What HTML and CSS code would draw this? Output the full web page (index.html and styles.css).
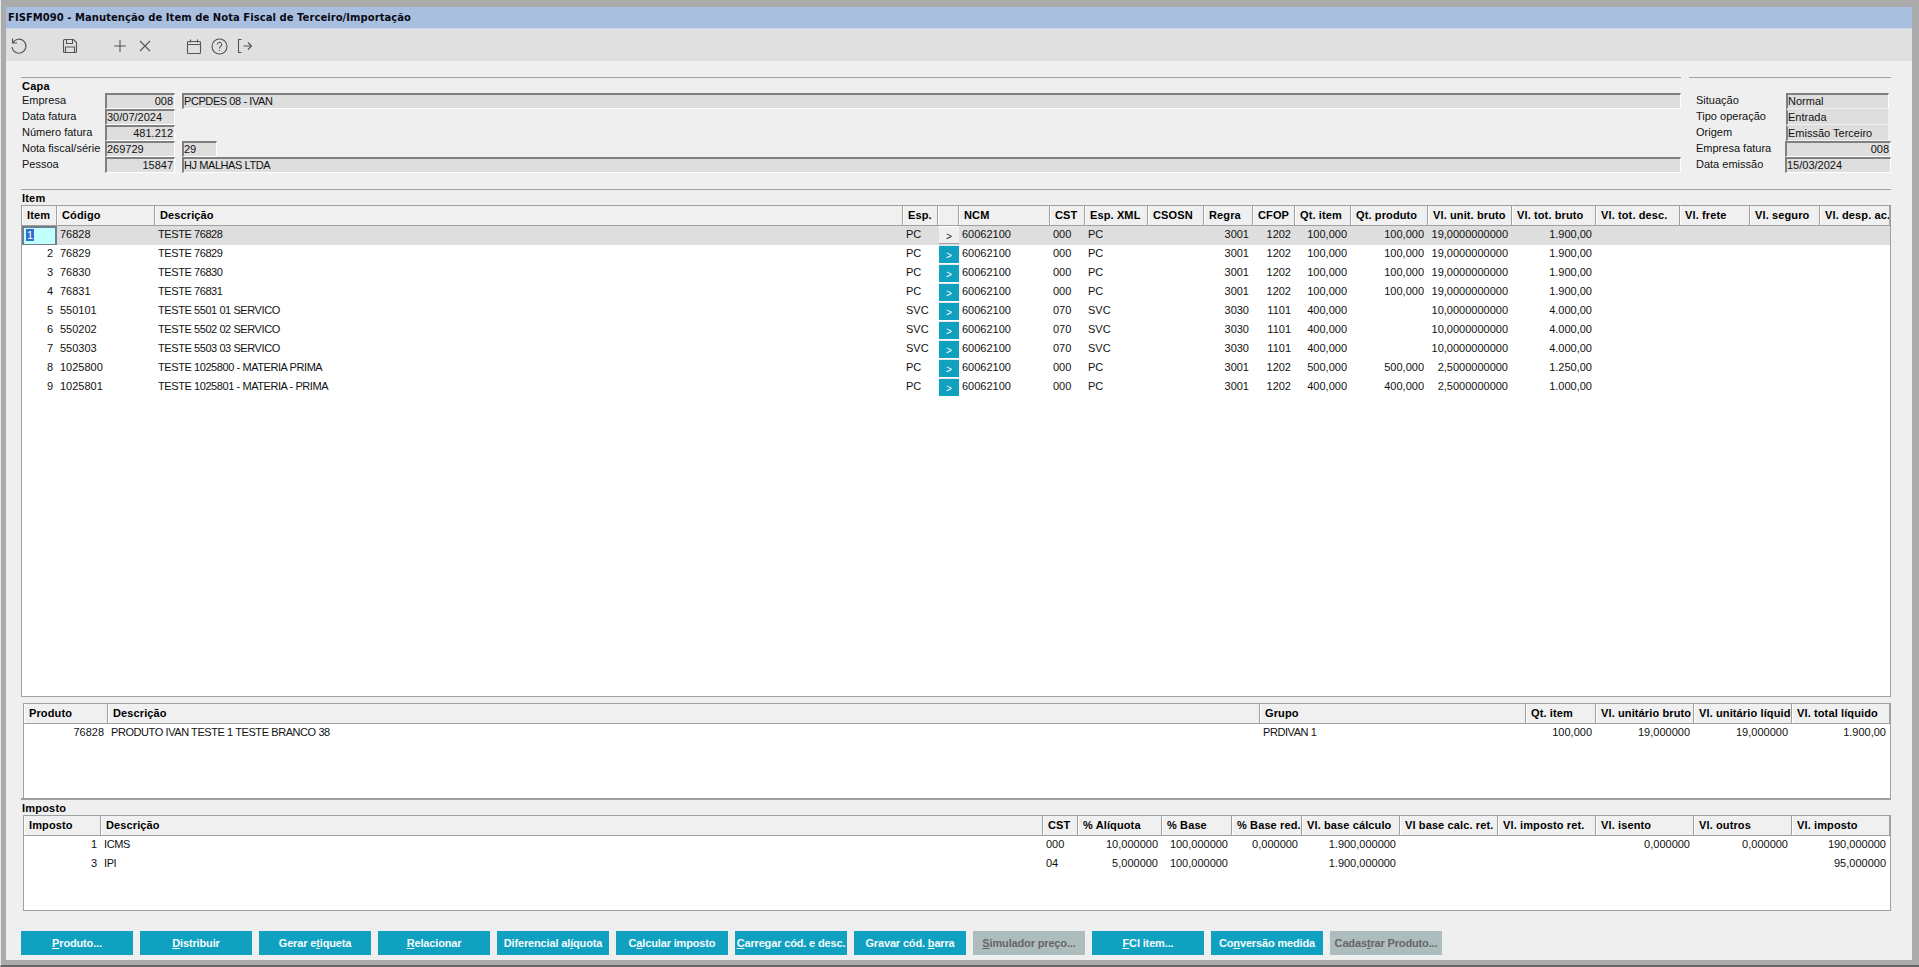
FILE: index.html
```html
<!DOCTYPE html>
<html lang="pt">
<head>
<meta charset="utf-8">
<title>FISFM090</title>
<link rel="stylesheet" href="styles.css">
</head>
<body>
<div class="window">
  <div class="title">FISFM090 - Manutenção de Item de Nota Fiscal de Terceiro/Importação</div>
  <div class="toolbar">
    <svg class="ic i-undo" width="18" height="18" viewBox="0 0 18 18"><path d="M2.5 1.5v4.5h4.5M2.8 5.8A7 7 0 1 1 2 10"/></svg>
    <svg class="ic i-save" width="16" height="16" viewBox="0 0 16 16"><path d="M1.5 2.5a1 1 0 0 1 1-1h9l3 3v9a1 1 0 0 1-1 1h-11a1 1 0 0 1-1-1zM4.5 1.5v4h6v-4M3.5 14.500v-5.500h9v5.500"/></svg>
    <svg class="ic i-plus" width="14" height="14" viewBox="0 0 14 14"><path d="M7 1v12M1 7h12"/></svg>
    <svg class="ic i-x" width="14" height="14" viewBox="0 0 14 14"><path d="M2 2l10 10M12 2L2 12"/></svg>
    <svg class="ic i-cal" width="16" height="17" viewBox="0 0 16 17"><path d="M1.500 4.500a1 1 0 0 1 1-1h11a1 1 0 0 1 1 1v10a1 1 0 0 1-1 1h-11a1 1 0 0 1-1-1zM1.500 6.500h13M4.500 1.500v3M11.500 1.500v3"/></svg>
    <svg class="ic i-help" width="17" height="17" viewBox="0 0 17 17"><circle cx="8.500" cy="8.500" r="7.500"/><path d="M6.300 6.500a2.200 2.200 0 1 1 3.400 1.900c-.8.500-1.200 1-1.200 2M8.500 12v1"/></svg>
    <svg class="ic i-exit" width="16" height="16" viewBox="0 0 16 16"><path d="M4.500 1.500h-3v13h3M6.500 8h8M11 4.500l3.500 3.500-3.500 3.500"/></svg>
  </div>
  <div class="content">
    <div class="capa">
      <section class="capa-main">
        <div class="legend">Capa</div>
        <div class="frow"><span class="lbl">Empresa</span><span class="fld w70 num">008</span><span class="fld grow cap">PCPDES 08 - IVAN</span></div>
        <div class="frow"><span class="lbl">Data fatura</span><span class="fld w70">30/07/2024</span></div>
        <div class="frow"><span class="lbl">Número fatura</span><span class="fld w70 num">481.212</span></div>
        <div class="frow"><span class="lbl">Nota fiscal/série</span><span class="fld w70">269729</span><span class="fld w35">29</span></div>
        <div class="frow"><span class="lbl">Pessoa</span><span class="fld w70 num">15847</span><span class="fld grow cap">HJ MALHAS LTDA</span></div>
      </section>
      <section class="capa-side">
        <div class="legend"></div>
        <div class="srow"><span class="lbl">Situação</span><span class="fld inner flat-top">Normal</span></div>
        <div class="srow"><span class="lbl">Tipo operação</span><span class="fld inner plain">Entrada</span></div>
        <div class="srow"><span class="lbl">Origem</span><span class="fld inner plain">Emissão Terceiro</span></div>
        <div class="srow"><span class="lbl">Empresa fatura</span><span class="fld outer num">008</span></div>
        <div class="srow"><span class="lbl">Data emissão</span><span class="fld outer">15/03/2024</span></div>
      </section>
    </div>

    <section class="sect-item">
      <div class="legend">Item</div>
      <div class="grid g-item">
        <div class="row head"><span>Item</span><span>Código</span><span>Descrição</span><span>Esp.</span><span></span><span>NCM</span><span>CST</span><span>Esp. XML</span><span>CSOSN</span><span>Regra</span><span>CFOP</span><span>Qt. item</span><span>Qt. produto</span><span>Vl. unit. bruto</span><span>Vl. tot. bruto</span><span>Vl. tot. desc.</span><span>Vl. frete</span><span>Vl. seguro</span><span>Vl. desp. ac.</span></div>
        <div class="row sel"><span class="num focus"><b class="caret">1</b></span><span>76828</span><span class="cap">TESTE 76828</span><span>PC</span><span class="btn off">&gt;</span><span>60062100</span><span>000</span><span>PC</span><span></span><span class="num">3001</span><span class="num">1202</span><span class="num">100,000</span><span class="num">100,000</span><span class="num">19,0000000000</span><span class="num">1.900,00</span><span></span><span></span><span></span><span></span></div>
        <div class="row"><span class="num">2</span><span>76829</span><span class="cap">TESTE 76829</span><span>PC</span><span class="btn">&gt;</span><span>60062100</span><span>000</span><span>PC</span><span></span><span class="num">3001</span><span class="num">1202</span><span class="num">100,000</span><span class="num">100,000</span><span class="num">19,0000000000</span><span class="num">1.900,00</span><span></span><span></span><span></span><span></span></div>
        <div class="row"><span class="num">3</span><span>76830</span><span class="cap">TESTE 76830</span><span>PC</span><span class="btn">&gt;</span><span>60062100</span><span>000</span><span>PC</span><span></span><span class="num">3001</span><span class="num">1202</span><span class="num">100,000</span><span class="num">100,000</span><span class="num">19,0000000000</span><span class="num">1.900,00</span><span></span><span></span><span></span><span></span></div>
        <div class="row"><span class="num">4</span><span>76831</span><span class="cap">TESTE 76831</span><span>PC</span><span class="btn">&gt;</span><span>60062100</span><span>000</span><span>PC</span><span></span><span class="num">3001</span><span class="num">1202</span><span class="num">100,000</span><span class="num">100,000</span><span class="num">19,0000000000</span><span class="num">1.900,00</span><span></span><span></span><span></span><span></span></div>
        <div class="row"><span class="num">5</span><span>550101</span><span class="cap">TESTE 5501 01 SERVICO</span><span>SVC</span><span class="btn">&gt;</span><span>60062100</span><span>070</span><span>SVC</span><span></span><span class="num">3030</span><span class="num">1101</span><span class="num">400,000</span><span class="num"></span><span class="num">10,0000000000</span><span class="num">4.000,00</span><span></span><span></span><span></span><span></span></div>
        <div class="row"><span class="num">6</span><span>550202</span><span class="cap">TESTE 5502 02 SERVICO</span><span>SVC</span><span class="btn">&gt;</span><span>60062100</span><span>070</span><span>SVC</span><span></span><span class="num">3030</span><span class="num">1101</span><span class="num">400,000</span><span class="num"></span><span class="num">10,0000000000</span><span class="num">4.000,00</span><span></span><span></span><span></span><span></span></div>
        <div class="row"><span class="num">7</span><span>550303</span><span class="cap">TESTE 5503 03 SERVICO</span><span>SVC</span><span class="btn">&gt;</span><span>60062100</span><span>070</span><span>SVC</span><span></span><span class="num">3030</span><span class="num">1101</span><span class="num">400,000</span><span class="num"></span><span class="num">10,0000000000</span><span class="num">4.000,00</span><span></span><span></span><span></span><span></span></div>
        <div class="row"><span class="num">8</span><span>1025800</span><span class="cap">TESTE 1025800 - MATERIA PRIMA</span><span>PC</span><span class="btn">&gt;</span><span>60062100</span><span>000</span><span>PC</span><span></span><span class="num">3001</span><span class="num">1202</span><span class="num">500,000</span><span class="num">500,000</span><span class="num">2,5000000000</span><span class="num">1.250,00</span><span></span><span></span><span></span><span></span></div>
        <div class="row"><span class="num">9</span><span>1025801</span><span class="cap">TESTE 1025801 - MATERIA - PRIMA</span><span>PC</span><span class="btn">&gt;</span><span>60062100</span><span>000</span><span>PC</span><span></span><span class="num">3001</span><span class="num">1202</span><span class="num">400,000</span><span class="num">400,000</span><span class="num">2,5000000000</span><span class="num">1.000,00</span><span></span><span></span><span></span><span></span></div>
      </div>
    </section>

    <div class="grid g-prod">
      <div class="row head"><span>Produto</span><span>Descrição</span><span>Grupo</span><span>Qt. item</span><span>Vl. unitário bruto</span><span>Vl. unitário líquido</span><span>Vl. total líquido</span></div>
      <div class="row"><span class="num">76828</span><span class="cap">PRODUTO IVAN TESTE 1 TESTE BRANCO 38</span><span class="cap">PRDIVAN 1</span><span class="num">100,000</span><span class="num">19,000000</span><span class="num">19,000000</span><span class="num">1.900,00</span></div>
    </div>

    <section class="sect-imposto">
      <div class="legend">Imposto</div>
      <div class="grid g-imp">
        <div class="row head"><span>Imposto</span><span>Descrição</span><span>CST</span><span>% Alíquota</span><span>% Base</span><span>% Base red.</span><span>Vl. base cálculo</span><span>Vl base calc. ret.</span><span>Vl. imposto ret.</span><span>Vl. isento</span><span>Vl. outros</span><span>Vl. imposto</span></div>
        <div class="row"><span class="num">1</span><span class="cap">ICMS</span><span>000</span><span class="num">10,000000</span><span class="num">100,000000</span><span class="num">0,000000</span><span class="num">1.900,000000</span><span></span><span></span><span class="num">0,000000</span><span class="num">0,000000</span><span class="num">190,000000</span></div>
        <div class="row"><span class="num">3</span><span class="cap">IPI</span><span>04</span><span class="num">5,000000</span><span class="num">100,000000</span><span></span><span class="num">1.900,000000</span><span></span><span></span><span></span><span></span><span class="num">95,000000</span></div>
      </div>
    </section>

    <div class="actions">
      <button class="act"><u>P</u>roduto...</button>
      <button class="act"><u>D</u>istribuir</button>
      <button class="act">Gerar e<u>t</u>iqueta</button>
      <button class="act"><u>R</u>elacionar</button>
      <button class="act">Diferencial al<u>í</u>quota</button>
      <button class="act">C<u>a</u>lcular imposto</button>
      <button class="act"><u>C</u>arregar cód. e desc.</button>
      <button class="act">Gravar cód. <u>b</u>arra</button>
      <button class="act dis"><u>S</u>imulador preço...</button>
      <button class="act"><u>F</u>CI item...</button>
      <button class="act">Co<u>n</u>versão medida</button>
      <button class="act dis">Cadas<u>t</u>rar Produto...</button>
    </div>
  </div>
</div>
</body>
</html>
```

FILE: styles.css
```css
* { box-sizing: border-box; }
html, body { margin: 0; height: 967px; overflow: hidden; }
body { font-family: "Liberation Sans", Arial, sans-serif; font-size: 11px; color: #111; background: #ababab; }

.window {
  height: 967px;
  display: flex;
  flex-direction: column;
  padding: 7px 7px 5px 5px;
  background: #ababab;
  border-left: 1px solid #e6e6e6;
  border-bottom: 2px solid #666;
}
.title {
  height: 22px;
  flex: none;
  padding-left: 2px;
  font: bold 10px/21px "DejaVu Sans", sans-serif;
  letter-spacing: .05px;
  background: #a9bfe0;
  border-bottom: 1px solid #c9d6ea;
  color: #0a0a14;
  white-space: nowrap;
}
.toolbar {
  height: 32px;
  flex: none;
  background: #e0e0e0;
  position: relative;
  display: flex;
  align-items: center;
  padding-top: 2px;
}
.ic { fill: none; stroke: #555; stroke-width: 1.1; flex: none; }
.i-undo { margin-left: 4px; }
.i-save { margin-left: 34px; }
.i-plus { margin-left: 35px; }
.i-x { margin-left: 11px; }
.i-cal { margin-left: 34px; }
.i-help { margin-left: 9px; }
.i-exit { margin-left: 9px; }

.content {
  flex: 1;
  min-height: 0;
  background: #efefef;
  padding: 16px 21px 0 15px;
  display: flex;
  flex-direction: column;
}

.legend { font-weight: bold; height: 15px; line-height: 16px; padding-left: 1px; letter-spacing: .2px; color: #000; }

.capa { display: flex; gap: 8px; height: 96px; flex: none; }
.capa-main { flex: 1; border-top: 1px solid #a0a0a0; }
.capa-side { width: 202px; border-top: 1px solid #a0a0a0; }
.frow, .srow { display: flex; height: 16px; }
.lbl { width: 84px; padding-left: 1px; line-height: 14px; white-space: nowrap; flex: none; }
.srow .lbl { width: 96px; padding-left: 7px; }
.fld {
  background: #dedede;
  border-top: 2px solid #808080;
  border-left: 2px solid #808080;
  border-right: 1px solid #fff;
  border-bottom: 1px solid #fff;
  line-height: 13px;
  padding: 0 1px 0 0;
  white-space: nowrap;
  overflow: hidden;
}
.w70 { width: 70px; flex: none; }
.w35 { width: 35px; flex: none; margin-left: 7px; }
.grow { flex: 1; margin-left: 7px; }
.num { text-align: right; }
.cap { letter-spacing: -.42px; }
.inner { width: 103px; margin-left: 1px; }
.outer { width: 106px; }
.plain { border-top-color: #dedede; border-bottom-color: #f0f0f0; border-right-color: #f0f0f0; }
.flat-top { border-bottom-color: #f0f0f0; }

.sect-item { margin-top: 16px; border-top: 1px solid #a0a0a0; flex: none; }
.grid { border: 1px solid #a0a0a0; background: #fff; overflow: hidden; }
.g-item { height: 492px; }
.g-prod { height: 95px; margin: 6px 0 0 2px; border-bottom: 0; flex: none; }
.sect-imposto { border-top: 2px solid #a0a0a0; flex: none; }
.g-imp { height: 96px; margin-left: 2px; }

.row { display: grid; height: 19px; line-height: 16px; }
.row > span { padding: 0 4px 0 3px; white-space: nowrap; overflow: hidden; }
.g-item .row { grid-template-columns: 35px 98px 748px 35px 21px 91px 35px 63px 56px 49px 42px 56px 77px 84px 84px 84px 70px 70px 70px; }
.g-prod .row { grid-template-columns: 84px 1152px 266px 70px 98px 98px 98px; }
.g-imp .row { grid-template-columns: 77px 942px 35px 84px 70px 70px 98px 98px 98px 98px 98px 98px; }

.row.head { height: 20px; background: #f0f0f0; border-bottom: 1px solid #a0a0a0; }
.row.head > span {
  font-weight: bold;
  line-height: 18px;
  padding: 0 0 0 4px;
  border-right: 1px solid #a0a0a0;
  border-left: 1px solid #fff;
  color: #000;
  letter-spacing: .12px;
}
.row.sel { background: #dedede; }
.focus {
  background: #c2ffff;
  border: 2px solid #6f7f8f;
  border-width: 2px 2px 1px 2px;
  text-align: left;
  line-height: 14px;
  padding: 0 0 0 2px !important;
}
.caret { font-weight: normal; background: #2f6fd0; color: #fff; padding: 0 1px; }
.row > .btn {
  background: #10a0c0;
  color: #fff;
  text-align: center;
  margin: 0 0 1px 1px;
  padding: 2px 0 0 0;
  font-size: 10px;
  line-height: 15px;
  border-top: 1px solid #e8e8e8;
}
.row > .btn.off {
  background: #efefef;
  color: #222;
  border-top: 1px solid #fff;
  border-bottom: 1px solid #a0a0a0;
}

.actions { display: flex; gap: 7px; margin-top: 20px; flex: none; }
.act {
  width: 112px;
  height: 24px;
  flex: none;
  border: 0;
  padding: 0;
  background: #10a0c0;
  color: #f4fbfd;
  font: bold 11px "Liberation Sans", Arial, sans-serif;
  letter-spacing: -.15px;
  white-space: nowrap;
}
.act.dis { background: #adbdbd; color: #666; }
```
